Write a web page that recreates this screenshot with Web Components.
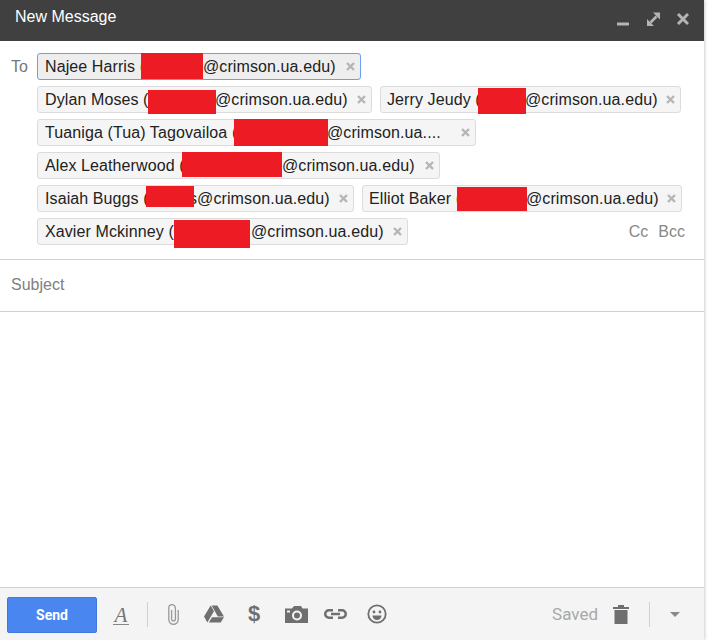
<!DOCTYPE html>
<html><head><meta charset="utf-8"><style>
html,body{margin:0;padding:0;background:#fff;height:640px;overflow:hidden;font-family:"Liberation Sans",Arial,sans-serif}
</style></head><body>
<compose-window>
  <compose-header slot="header"></compose-header>
  <recipient-field slot="to">
    <mail-chip w="324" nw="96" name="Najee Harris (" red="62" dy="-1" h="26" focus></mail-chip>
    <mail-chip w="335" nw="103" name="Dylan Moses (" red="68" dy="2" h="24" tm="-1"></mail-chip>
    <mail-chip w="301" nw="91" pl="6" name="Jerry Jeudy (" red="48" dy="1" h="26" tm="-1"></mail-chip>
    <mail-chip w="439" nw="189" name="Tuaniga (Tua) Tagovailoa (" red="94" dy="0" h="27" tail="@crimson.ua...." tm="-1"></mail-chip>
    <mail-chip w="403" nw="137" name="Alex Leatherwood (" red="100" dy="-1" h="25"></mail-chip>
    <mail-chip w="317" nw="101" name="Isaiah Buggs (" red="48" dy="-2" h="21" tail="s@crimson.ua.edu)" tm="-5"></mail-chip>
    <mail-chip w="320" nw="88" pl="6" name="Elliot Baker (" red="70" dy="0" h="24" tm="-1"></mail-chip>
    <mail-chip w="371" nw="129" name="Xavier Mckinney (" red="76" dy="2" h="28" tm="1"></mail-chip>
    <cc-links></cc-links>
  </recipient-field>
  <subject-field slot="subject"></subject-field>
  <compose-footer slot="footer"></compose-footer>
</compose-window>
<script>
function el(name,html){customElements.define(name,class extends HTMLElement{constructor(){super();this.attachShadow({mode:'open'}).innerHTML=typeof html==='function'?html(this):html}})}
el('compose-window',`<style>:host{display:flex;flex-direction:column;width:704px;height:640px;background:#fff;box-shadow:1px 0 3px rgba(0,0,0,.2);color:#222}
.body{flex:1}</style><slot name="header"></slot><slot name="to"></slot><slot name="subject"></slot><div class="body"></div><slot name="footer"></slot>`);
el('compose-header',`<style>:host{display:flex;align-items:flex-start;height:41px;background:#404040;color:#fff;font-size:16px;padding:0 15px 0 15px;box-sizing:border-box}
span{flex:1;line-height:33px}svg{display:block;margin-top:12px}</style><span>New Message</span>
<svg width="72" height="14" viewBox="0 0 72 14"><rect x="0" y="10.500" width="12" height="3" fill="#b4b4b4"/>
<path d="M36 .5h7v7zM30 7v7h7z" fill="#b4b4b4"/><path d="M33.500 10.500l6-6" stroke="#b4b4b4" stroke-width="2.600"/>
<path d="M61 2l10 10M71 2l-10 10" stroke="#b4b4b4" stroke-width="3"/></svg>`);
el('recipient-field',`<style>:host{display:block;position:relative;box-sizing:border-box;height:219px;padding:12px 19px 0 37px;border-bottom:1px solid #cfcfcf;font-size:16px}
.to{position:absolute;left:11px;top:17px;color:#777}
.w{display:flex;flex-wrap:wrap;gap:6px 8px;align-items:flex-start}</style><span class="to">To</span><div class="w"><slot></slot></div>`);
el('mail-chip',h=>{
 const a=n=>h.getAttribute(n),tail=a('tail')||'@crimson.ua.edu)',f=h.hasAttribute('focus');
 return `<style>:host{display:inline-flex;align-items:center;box-sizing:border-box;width:${a('w')}px;height:27px;padding:0 5px 0 ${a('pl')||7}px;background:${f?'#eeeeee':'#f5f5f5'};border:1px solid ${f?'#6a9ff5':'#dcdcdc'};border-radius:3px;font-size:16px;color:#222;white-space:nowrap;letter-spacing:.1px}
.n{width:${a('nw')}px;flex:none}
.r{flex:none;position:relative;z-index:1;width:${a('red')}px;height:${a('h')}px;margin:-8px 0;top:${a('dy')}px;background:#ed1c24}
.x{margin-left:${a('tm')||0}px;flex:none}
svg{margin-left:auto;display:block;flex:none}</style><span class="n">${a('name')}</span><span class="r"></span><span class="x">${tail}</span>
<svg width="9" height="9" viewBox="0 0 9 9"><path d="M1 1l7 7M8 1l-7 7" stroke="#b5b5b5" stroke-width="2.400"/></svg>`});
el('cc-links',`<style>:host{display:flex;gap:10px;margin-left:auto;align-self:center;font-size:16px;color:#888}</style><span>Cc</span><span>Bcc</span>`);
el('subject-field',`<style>:host{display:flex;align-items:center;box-sizing:border-box;height:52px;padding:0 0 2px 11px;border-bottom:1px solid #cfcfcf;font-size:16px;color:#808080}</style><span>Subject</span>`);
el('compose-footer',`<style>:host{display:flex;align-items:center;box-sizing:border-box;height:53px;background:#f4f4f4;border-top:1px solid #cfcfcf;padding:0 0 0 7px;color:#6f6f6f}
button{all:unset;box-sizing:border-box;width:90px;height:36px;margin-top:1px;background:#4a86f0;border:1px solid #3f79e0;border-radius:2px;color:#fff;font:bold 14px "Roboto","Liberation Sans",sans-serif;text-align:center;line-height:34px}
svg{display:block;flex:none}
.sep{width:1px;height:25px;background:#d0d0d0;flex:none}
.saved{color:#a8a8a8;font:17px "Roboto","Liberation Sans",sans-serif}
.a{box-sizing:border-box;width:16px;height:17px;margin:4px 0 0 16px;border-bottom:1.500px solid #888;font:italic 21px/15px "Liberation Serif",serif;text-align:center;color:#777}
.d{width:14px;margin-left:23px;font:bold 22px/22px "Liberation Sans",sans-serif;text-align:center;color:#6f6f6f}
.sp{flex:1}</style>
<button>Send</button>
<span class="a">A</span>
<span class="sep" style="margin-left:18px"></span>
<svg style="margin-left:20px" width="11" height="21" viewBox="0 0 11 21"><path d="M3.600 6V15a1.900 1.900 0 0 0 3.800 0V4a3.300 3.300 0 0 0-6.600 0V15.600a4.700 4.700 0 0 0 9.400 0V6" fill="none" stroke="#999" stroke-width="1.300"/></svg>
<svg style="margin-left:25px" width="20" height="18" viewBox="0 0 21 18"><path d="M7 0L0 11.500 3.500 18 10.500 6zM8 0h6l7 11.500h-6.500zM5 18h12.500L21 12.500H8.500z" fill="#6f6f6f"/></svg>
<span class="d">$</span>
<svg style="margin-left:24px" width="23" height="17" viewBox="0 0 23 17"><path fill-rule="evenodd" d="M0 2.500h7L9 0h7l1.500 2.500H23V17H0zM12 4.500a5 5 0 1 0 0 10 5 5 0 0 0 0-10zM12 6.500a3 3 0 1 1 0 6 3 3 0 0 1 0-6zM2 4.500v2h3v-2z" fill="#6f6f6f"/></svg>
<svg style="margin-left:16px" width="23" height="10" viewBox="0 0 23 10"><path d="M9 1.250H5a3.750 3.750 0 0 0 0 7.500h4M14 1.250h4a3.750 3.750 0 0 1 0 7.500h-4M7 5h9" fill="none" stroke="#6f6f6f" stroke-width="2.500"/></svg>
<svg style="margin-left:20px" width="20" height="20" viewBox="0 0 20 20"><circle cx="10" cy="10" r="8.700" fill="none" stroke="#6f6f6f" stroke-width="1.800"/><circle cx="7" cy="8" r="1.400" fill="#6f6f6f"/><circle cx="13" cy="8" r="1.400" fill="#6f6f6f"/><path d="M5.500 11.500h9a4.500 4.500 0 0 1-9 0z" fill="#6f6f6f"/></svg>
<span class="sp"></span>
<span class="saved">Saved</span>
<svg style="margin-left:15px" width="16" height="19" viewBox="0 0 16 19"><path d="M0 2h5V0h6v2h5v2H0zM1.500 5h13v14h-13z" fill="#6f6f6f"/></svg>
<span class="sep" style="margin-left:20px"></span>
<svg style="margin-left:20px;margin-right:24px" width="10" height="5" viewBox="0 0 10 5"><path d="M0 0h10L5 5z" fill="#8a8a8a"/></svg>`);
</script></body></html>
